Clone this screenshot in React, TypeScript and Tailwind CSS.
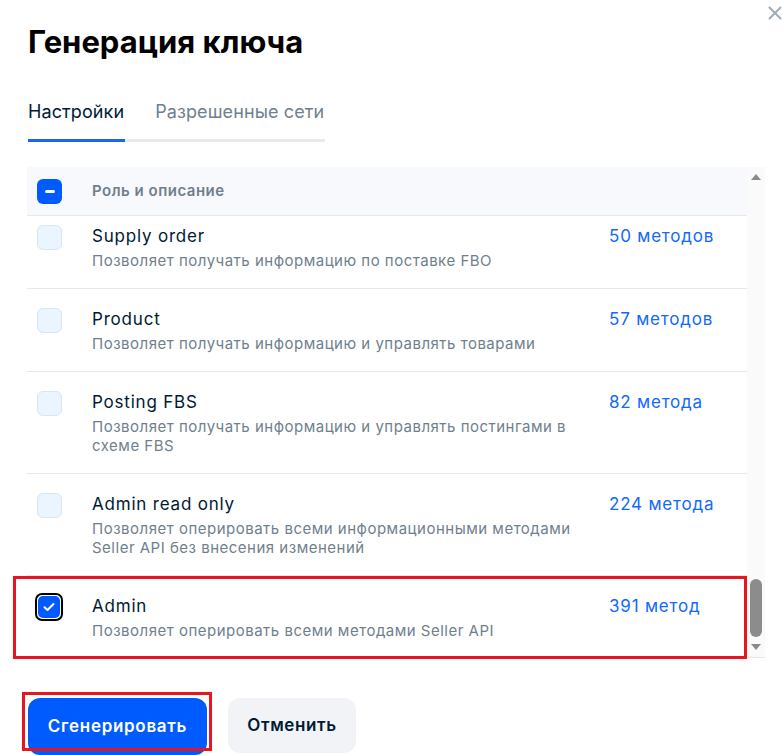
import { X } from 'lucide-react';

type Role = {
    name: string;
    desc: string;
    methods: string;
    checked?: boolean;
    top?: string;
};

const roles: Role[] = [
    { name: 'Supply order', desc: 'Позволяет получать информацию по поставке FBO', methods: '50 методов', top: 'pt-[9px]' },
    { name: 'Product', desc: 'Позволяет получать информацию и управлять товарами', methods: '57 методов' },
    { name: 'Posting FBS', desc: 'Позволяет получать информацию и управлять постингами в схеме FBS', methods: '82 метода' },
    { name: 'Admin read only', desc: 'Позволяет оперировать всеми информационными методами Seller API без внесения изменений', methods: '224 метода' },
    { name: 'Admin', desc: 'Позволяет оперировать всеми методами Seller API', methods: '391 метод', checked: true },
];

function Checkbox({ checked }: { checked?: boolean }) {
    if (checked) {
        return (
            <div className="w-[28px] h-[28px] rounded-[7px] border-2 border-black p-[1px] -ml-[2px] -mt-[2px]">
                <div className="w-full h-full rounded-[5px] bg-[#005bff] flex items-center justify-center">
                    <svg width="12" height="10" viewBox="0 0 12 10" fill="none">
                        <path d="M1.5 5.2 L4.5 8 L10.5 2" stroke="white" strokeWidth="2" strokeLinecap="round" strokeLinejoin="round" />
                    </svg>
                </div>
            </div>
        );
    }
    return <div className="w-[25px] h-[25px] rounded-[6px] bg-[#eaf5ff] border border-[#d8e6f2]" />;
}

function RoleRow({ role }: { role: Role }) {
    return (
        <div className={`relative flex ${role.top ?? 'pt-[19px]'} pb-[18px] border-b border-[#e3e9f0]`}>
            <div className="w-[65px] pl-[10px]">
                <Checkbox checked={role.checked} />
            </div>
            <div className="flex-1 pr-[30px]">
                <div className="text-[17px] leading-[22px] text-[#001a34] tracking-[0.8px]">{role.name}</div>
                <div className="mt-[4px] text-[15px] leading-[19px] text-[#707f8d] tracking-[0.5px] max-w-[485px]">{role.desc}</div>
            </div>
            <div className="w-[138px] text-[17px] leading-[22px] text-[#1268ff] tracking-[0.8px]">{role.methods}</div>
            {role.checked && <div className="absolute -left-[14px] right-0 top-0 -bottom-[1px] border-[3px] border-[#e8141f]" />}
        </div>
    );
}

export default function App() {
    return (
        <div className="relative w-[783px] h-[755px] bg-white overflow-hidden font-['Inter',sans-serif]">
            <X className="absolute right-[-3px] top-[2px] text-[#a3adb8]" size={22} strokeWidth={2.3} />

            <h1 className="pt-[22px] pl-[28px] text-[31px] leading-[40px] font-bold text-black">Генерация ключа</h1>

            <div className="mt-[38px] ml-[28px] w-[297px]">
                <div className="flex gap-[31px] text-[18px] leading-[24px] tracking-[0.1px]">
                    <span className="text-[#001a34]">Настройки</span>
                    <span className="text-[#707f8d]">Разрешенные сети</span>
                </div>
                <div className="mt-[15px] h-[3px] bg-[#e8eaed] flex">
                    <div className="w-[97px] bg-[#1a66ee]" />
                </div>
            </div>

            <div className="mt-[25px] ml-[27px] flex">
                <div className="w-[720px] h-[491px]">
                    <div className="h-[49px] bg-[#f8f9fc] border-b border-[#e3e9f0] flex items-center">
                        <div className="w-[65px] pl-[10px]">
                            <div className="w-[25px] h-[25px] rounded-[6px] bg-[#005bff] flex items-center justify-center">
                                <div className="w-[10px] h-[3px] rounded bg-white" />
                            </div>
                        </div>
                        <span className="text-[15px] font-semibold text-[#707f8d] tracking-[0.5px]">Роль и описание</span>
                    </div>
                    {roles.map((r) => (
                        <RoleRow key={r.name} role={r} />
                    ))}
                </div>
                <div className="w-[18px] h-[491px] bg-[#fafafa] flex flex-col items-center border-b border-[#e8e8e8]">
                    <svg width="12" height="8" viewBox="0 0 12 8" className="mt-[6px]">
                        <path d="M6 1 L11 7 H1 Z" fill="#8a8a8a" />
                    </svg>
                    <div className="flex-1" />
                    <div className="w-[12px] h-[58px] rounded-full bg-[#8c8c8c]" />
                    <svg width="12" height="8" viewBox="0 0 12 8" className="mt-[6px] mb-[6px]">
                        <path d="M6 7 L11 1 H1 Z" fill="#8a8a8a" />
                    </svg>
                </div>
            </div>

            <div className="mt-[40px] ml-[28px] flex gap-[21px]">
                <div className="relative">
                    <button className="w-[179px] h-[57px] rounded-[12px] bg-[#005bff] text-white text-[17px] font-semibold tracking-[0.7px]">Сгенерировать</button>
                    <div className="absolute -left-[6px] -top-[6px] w-[190px] h-[59px] border-[3px] border-[#e8141f]" />
                </div>
                <button className="w-[128px] h-[55px] rounded-[12px] bg-[#f2f3f7] text-[#001a34] text-[17px] font-semibold tracking-[0.6px]">Отменить</button>
            </div>
        </div>
    );
}
